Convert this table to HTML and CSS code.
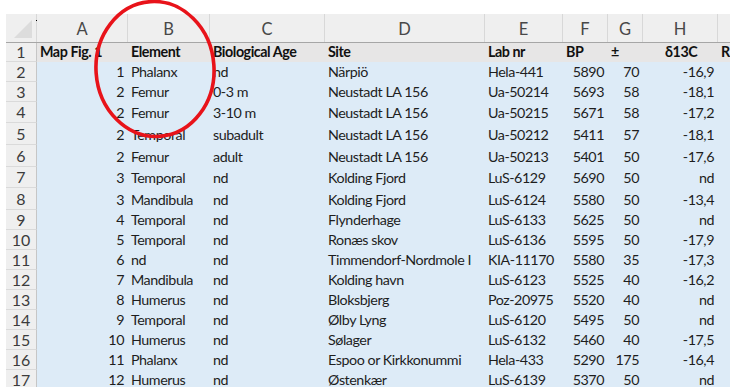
FILE: index.html
```html
<!DOCTYPE html>
<html>
<head>
<meta charset="utf-8">
<link rel="stylesheet" href="styles.css">
</head>
<body>
<div class="sheet">
  <div class="row colhead">
    <div class="corner"><span class="tri"></span><span class="dot"></span></div>
    <div class="ch">A</div><div class="ch">B</div><div class="ch">C</div><div class="ch">D</div><div class="ch">E</div><div class="ch">F</div><div class="ch">G</div><div class="ch">H</div><div class="ch"></div>
  </div>
  <div class="row r1 head">
    <div class="rh">1</div>
    <div class="c l">Map Fig. 1</div><div class="c l">Element</div><div class="c l">Biological Age</div><div class="c l">Site</div><div class="c l">Lab nr</div><div class="c l">BP</div><div class="c l">±</div><div class="c l hd">δ13C</div><div class="c l">R</div>
  </div>
  <div class="row h20"><div class="rh">2</div><div class="c r">1</div><div class="c l">Phalanx</div><div class="c l">nd</div><div class="c l">Närpiö</div><div class="c l">Hela-441</div><div class="c r">5890</div><div class="c r">70</div><div class="c r">-16,9</div><div class="c"></div></div>
  <div class="row h20"><div class="rh">3</div><div class="c r">2</div><div class="c l">Femur</div><div class="c l">0-3 m</div><div class="c l">Neustadt LA 156</div><div class="c l">Ua-50214</div><div class="c r">5693</div><div class="c r">58</div><div class="c r">-18,1</div><div class="c"></div></div>
  <div class="row h21"><div class="rh">4</div><div class="c r">2</div><div class="c l">Femur</div><div class="c l">3-10 m</div><div class="c l">Neustadt LA 156</div><div class="c l">Ua-50215</div><div class="c r">5671</div><div class="c r">58</div><div class="c r">-17,2</div><div class="c"></div></div>
  <div class="row h22"><div class="rh">5</div><div class="c r">2</div><div class="c l">Temporal</div><div class="c l">subadult</div><div class="c l">Neustadt LA 156</div><div class="c l">Ua-50212</div><div class="c r">5411</div><div class="c r">57</div><div class="c r">-18,1</div><div class="c"></div></div>
  <div class="row h22"><div class="rh">6</div><div class="c r">2</div><div class="c l">Femur</div><div class="c l">adult</div><div class="c l">Neustadt LA 156</div><div class="c l">Ua-50213</div><div class="c r">5401</div><div class="c r">50</div><div class="c r">-17,6</div><div class="c"></div></div>
  <div class="row h21"><div class="rh">7</div><div class="c r">3</div><div class="c l">Temporal</div><div class="c l">nd</div><div class="c l">Kolding Fjord</div><div class="c l">LuS-6129</div><div class="c r">5690</div><div class="c r">50</div><div class="c r">nd</div><div class="c"></div></div>
  <div class="row h22"><div class="rh">8</div><div class="c r">3</div><div class="c l">Mandibula</div><div class="c l">nd</div><div class="c l">Kolding Fjord</div><div class="c l">LuS-6124</div><div class="c r">5580</div><div class="c r">50</div><div class="c r">-13,4</div><div class="c"></div></div>
  <div class="row h20"><div class="rh">9</div><div class="c r">4</div><div class="c l">Temporal</div><div class="c l">nd</div><div class="c l">Flynderhage</div><div class="c l">LuS-6133</div><div class="c r">5625</div><div class="c r">50</div><div class="c r">nd</div><div class="c"></div></div>
  <div class="row h20"><div class="rh">10</div><div class="c r">5</div><div class="c l">Temporal</div><div class="c l">nd</div><div class="c l">Ronæs skov</div><div class="c l">LuS-6136</div><div class="c r">5595</div><div class="c r">50</div><div class="c r">-17,9</div><div class="c"></div></div>
  <div class="row h20"><div class="rh">11</div><div class="c r">6</div><div class="c l">nd</div><div class="c l">nd</div><div class="c l">Timmendorf-Nordmole I</div><div class="c l">KIA-11170</div><div class="c r">5580</div><div class="c r">35</div><div class="c r">-17,3</div><div class="c"></div></div>
  <div class="row h20"><div class="rh">12</div><div class="c r">7</div><div class="c l">Mandibula</div><div class="c l">nd</div><div class="c l">Kolding havn</div><div class="c l">LuS-6123</div><div class="c r">5525</div><div class="c r">40</div><div class="c r">-16,2</div><div class="c"></div></div>
  <div class="row h20"><div class="rh">13</div><div class="c r">8</div><div class="c l">Humerus</div><div class="c l">nd</div><div class="c l">Bloksbjerg</div><div class="c l">Poz-20975</div><div class="c r">5520</div><div class="c r">40</div><div class="c r">nd</div><div class="c"></div></div>
  <div class="row h20"><div class="rh">14</div><div class="c r">9</div><div class="c l">Temporal</div><div class="c l">nd</div><div class="c l">Ølby Lyng</div><div class="c l">LuS-6120</div><div class="c r">5495</div><div class="c r">50</div><div class="c r">nd</div><div class="c"></div></div>
  <div class="row h20"><div class="rh">15</div><div class="c r">10</div><div class="c l">Humerus</div><div class="c l">nd</div><div class="c l">Sølager</div><div class="c l">LuS-6132</div><div class="c r">5460</div><div class="c r">40</div><div class="c r">-17,5</div><div class="c"></div></div>
  <div class="row h20"><div class="rh">16</div><div class="c r">11</div><div class="c l">Phalanx</div><div class="c l">nd</div><div class="c l">Espoo or Kirkkonummi</div><div class="c l">Hela-433</div><div class="c r">5290</div><div class="c r">175</div><div class="c r">-16,4</div><div class="c"></div></div>
  <div class="row h20"><div class="rh">17</div><div class="c r">12</div><div class="c l">Humerus</div><div class="c l">nd</div><div class="c l">Østenkær</div><div class="c l">LuS-6139</div><div class="c r">5370</div><div class="c r">50</div><div class="c r">nd</div><div class="c"></div></div>
  <svg class="ring" width="140" height="150" viewBox="0 0 140 150"><ellipse cx="64" cy="75" rx="59" ry="67.5" fill="none" stroke="#e8131a" stroke-width="3.6" transform="rotate(-4 64 75)"/></svg>
</div>
</body>
</html>
```
FILE: styles.css
```css
html, body { margin: 0; padding: 0; background: #fff; }
body { overflow: hidden; width: 730px; height: 387px; }
.sheet {
  position: relative;
  margin-top: 14px;
  margin-left: 6px;
  font-family: Lato, "Liberation Sans", sans-serif;
  font-size: 14.3px;
  letter-spacing: -0.45px;
  color: #1e1e1e;
}
.row {
  display: grid;
  grid-template-columns: 31px 91px 82px 115px 160px 78px 45px 35px 75px 40px;
  background: #ddebf7;
}
.h20 { height: 20px; }
.h21 { height: 21px; }
.h22 { height: 22px; }
.r1 { height: 19px; background: #e7e6e6; font-weight: 700; color: #111; }
.colhead {
  height: 28px;
  background: #efefef;
  border-bottom: 1px solid #a6a6a6;
}
.ch {
  display: flex; align-items: center; justify-content: center;
  font-size: 16.5px; color: #484848;
  letter-spacing: 0;
  border-right: 1px solid #d8d8d8;
  padding-top: 2px;
}
.corner { position: relative; border-right: 1px solid #d8d8d8; }
.tri {
  position: absolute; right: 4px; bottom: 4px;
  width: 0; height: 0;
  border-left: 18px solid transparent;
  border-bottom: 18px solid #dcdcdc;
}
.dot { position: absolute; right: -1px; top: 6px; width: 1px; height: 1px; background: #000; }
.rh {
  background: #efefef;
  color: #3c3c3c;
  font-size: 16px;
  font-weight: 400;
  letter-spacing: 0;
  display: flex; align-items: center; justify-content: center;
  border-right: 1px solid #c6c6c6;
  border-bottom: 1px solid #dadada;
  box-sizing: border-box;
  line-height: 1;
}
.c {
  display: flex; align-items: flex-end;
  white-space: nowrap; overflow: visible;
  padding: 0 3px 2px 3px;
  line-height: 17px;
  min-width: 0;
}
.c.l { justify-content: flex-start; }
.c.r { justify-content: flex-end; padding-right: 4px; }
.r1 .c { overflow: hidden; }
.r1 .c:first-of-type { overflow: visible; }
.hd { padding-left: 22px; }
.ring { position: absolute; left: 85px; top: -20px; }
```
